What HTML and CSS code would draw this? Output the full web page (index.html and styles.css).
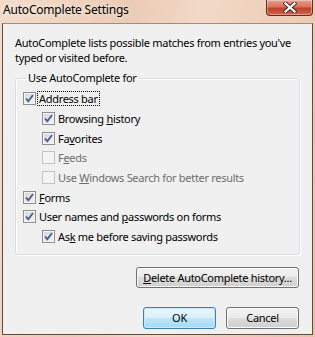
FILE: index.html
```html
<!DOCTYPE html>
<html lang="en">
<head>
    <meta charset="UTF-8">
    <title>AutoComplete Settings</title>
    <link rel="stylesheet" href="styles.css">
</head>
<body>
    <div class="window">
        <div class="titlebar">
            <span class="title">AutoComplete Settings</span>
            <button class="close" aria-label="Close">
                <svg width="14" height="11" viewBox="0 0 14 11">
                    <path d="M2.5 1.5 L11.5 9.5 M11.5 1.5 L2.5 9.5" stroke="#3a2a28" stroke-width="4" stroke-linecap="square"/>
                    <path d="M2.5 1.5 L11.5 9.5 M11.5 1.5 L2.5 9.5" stroke="#ffffff" stroke-width="2.2" stroke-linecap="square"/>
                </svg>
            </button>
        </div>

        <div class="client">
            <p class="intro">AutoComplete lists possible matches from entries you've typed or visited before.</p>

            <fieldset class="group">
                <legend>Use AutoComplete for</legend>

                <label class="row">
                    <span class="box checked"></span>
                    <span class="text focus">Address bar</span>
                </label>
                <label class="row sub">
                    <span class="box checked"></span>
                    <span class="text">Browsing <u>h</u>istory</span>
                </label>
                <label class="row sub">
                    <span class="box checked"></span>
                    <span class="text">Fa<u>v</u>orites</span>
                </label>
                <label class="row sub disabled">
                    <span class="box"></span>
                    <span class="text">F<u>e</u>eds</span>
                </label>
                <label class="row sub disabled">
                    <span class="box"></span>
                    <span class="text">Use <u>W</u>indows Search for better results</span>
                </label>
                <label class="row">
                    <span class="box checked"></span>
                    <span class="text"><u>F</u>orms</span>
                </label>
                <label class="row">
                    <span class="box checked"></span>
                    <span class="text">User names and <u>p</u>asswords on forms</span>
                </label>
                <label class="row sub">
                    <span class="box checked"></span>
                    <span class="text">As<u>k</u> me before saving passwords</span>
                </label>
            </fieldset>

            <div class="actions">
                <button class="btn wide"><u>D</u>elete AutoComplete history...</button>
            </div>

            <div class="actions footer">
                <button class="btn default">OK</button>
                <button class="btn">Cancel</button>
            </div>
        </div>
    </div>
</body>
</html>
```

FILE: styles.css
```css
html, body {
    margin: 0;
    padding: 0;
}
body {
    width: 315px;
    height: 337px;
    overflow: hidden;
    font-family: "Noto Sans", "Open Sans", sans-serif;
    font-size: 11px;
    letter-spacing: -0.3px;
    color: #000;
}
.window {
    width: 315px;
    height: 337px;
    box-sizing: border-box;
    display: flex;
    flex-direction: column;
    background: linear-gradient(100deg, #f3dccb 0%, #eccbb4 35%, #f2d9c7 55%, #e9c2a6 100%);
}
.titlebar {
    height: 23px;
    flex: none;
    display: flex;
    align-items: flex-start;
    justify-content: space-between;
}
.title {
    margin: 2px 0 0 3px;
    line-height: 16px;
    font-size: 12px;
    letter-spacing: -0.2px;
    text-shadow: 0 0 6px rgba(255,255,255,0.9);
}
.close {
    width: 47px;
    height: 16px;
    margin-right: 2px;
    padding: 0;
    border: 1px solid #5c3024;
    border-top: none;
    border-radius: 0 0 4px 4px;
    background: linear-gradient(#e7a08f 0%, #d8735f 45%, #c44128 55%, #d2654c 100%);
    box-shadow: inset 0 0 0 1px rgba(255,255,255,0.35);
    display: flex;
    align-items: center;
    justify-content: center;
}
.client {
    flex: 1;
    margin: 0 2px 2px 2px;
    border: 1px solid #5e4c44;
    border-top-color: #a58b7d;
    background: #f0f0f0;
    padding: 0 12px 0 12px;
    display: flex;
    flex-direction: column;
}
.intro {
    margin: 11px 0 0 0;
    line-height: 15px;
}
.group {
    margin: 6px 0 0 0;
    padding: 4px 0 7px 7px;
    border: 1px solid #d5dfe5;
    border-radius: 3px;
    box-shadow: inset 1px 1px 0 #fff, 1px 1px 0 #fff;
}
.group legend {
    padding: 0 2px;
    margin-left: 3px;
    line-height: 14px;
}
.row {
    display: flex;
    align-items: center;
    height: 19.7px;
    gap: 1px;
}
.row.sub {
    padding-left: 19px;
}
.box {
    width: 13px;
    height: 13px;
    box-sizing: border-box;
    border: 1px solid #8e8f8f;
    background: linear-gradient(135deg, #dcdcdc, #f7f7f7);
    box-shadow: inset 0 0 0 1px #f4f4f4;
    flex: none;
}
.box.checked {
    background-color: #eee;
    background-image: url("data:image/svg+xml,%3Csvg xmlns='http://www.w3.org/2000/svg' width='11' height='11'%3E%3Cpath d='M2 5.5 L4.3 8.2 L9 2' fill='none' stroke='%234a5f97' stroke-width='1.9'/%3E%3C/svg%3E"), linear-gradient(135deg, #d4d4d4, #f5f5f5);
    background-repeat: no-repeat;
    background-position: center;
}
.disabled .box {
    border-color: #c4c4c4;
    background: #f4f4f4;
    box-shadow: none;
}
.disabled .text {
    color: #6d6d6d;
}
.text {
    line-height: 13px;
    padding: 0 1px;
    border: 1px solid transparent;
    white-space: nowrap;
}
.text.focus {
    border: 1px dotted #000;
}
.actions {
    display: flex;
    justify-content: flex-end;
    gap: 10px;
    margin-top: 12px;
    padding-right: 1px;
}
.footer {
    margin-top: 19px;
}
.btn {
    font-family: inherit;
    font-size: 11px;
    letter-spacing: -0.3px;
    color: #000;
    height: 21px;
    width: 73px;
    padding: 0 4px;
    white-space: nowrap;
    border: 1px solid #707070;
    border-radius: 3px;
    background: linear-gradient(#f2f2f2 0%, #ebebeb 49%, #dddddd 50%, #cfcfcf 100%);
    box-shadow: inset 0 0 0 1px #fcfcfc;
}
.btn.wide {
    width: 163px;
}
.btn.default {
    border-color: #3c7fb1;
    background: linear-gradient(#eaf6fd 0%, #d9f0fc 49%, #bee6fd 50%, #a7d9f5 100%);
    box-shadow: inset 0 0 0 1px #c8eaf9;
}
.footer .btn {
    height: 22px;
}
```
